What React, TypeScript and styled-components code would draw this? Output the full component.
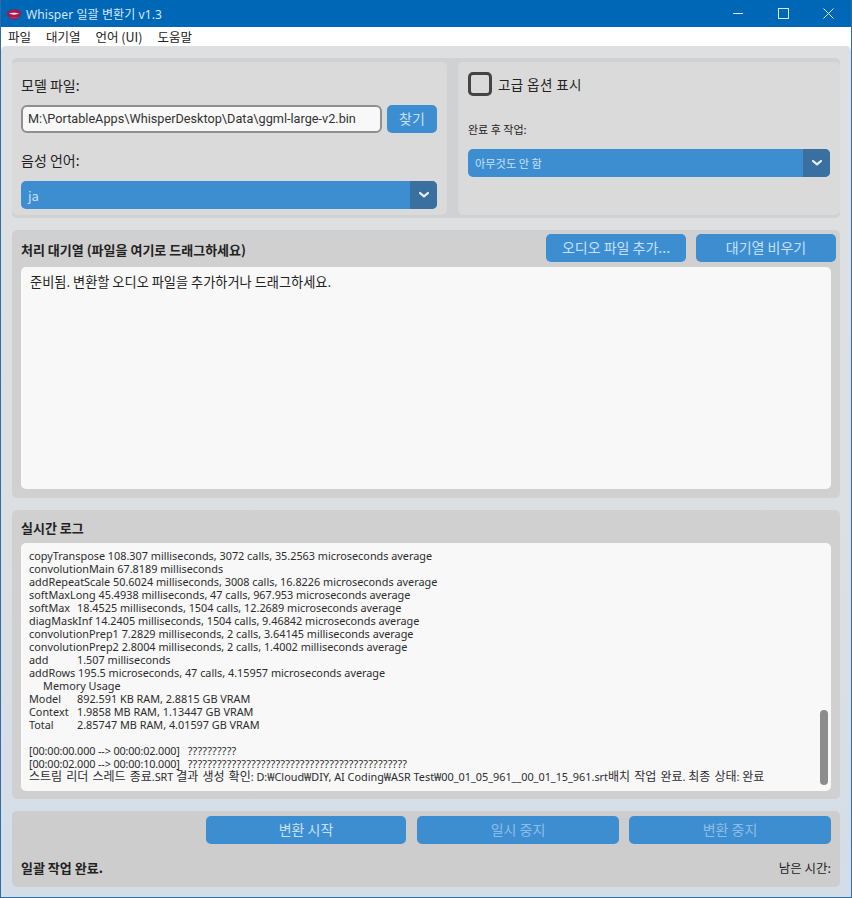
import React from "react";
import styled, { createGlobalStyle } from "styled-components";

const KR = `"Noto Sans CJK KR", "Noto Sans", sans-serif`;
const LOG = `"Noto Sans", "Noto Sans CJK KR", sans-serif`;

const Global = createGlobalStyle`
  html, body { margin: 0; padding: 0; background: #dfe3e8; }
  * { box-sizing: border-box; }
`;

const Win = styled.div`
  width: 852px; height: 898px; display: flex; flex-direction: column;
  border: 1px solid #2c6ea8; border-top: none; background: #fff;
  font-family: ${KR}; color: #1a1a1a; overflow: hidden;
`;
const TitleBar = styled.div`
  height: 27px; flex: none; background: #0067b6; color: #d5e8f6; display: flex; align-items: center;
  padding-left: 5px; font-size: 12px;
`;
const Title = styled.span` flex: 1; margin-left: 4px; letter-spacing: 0.1px; font-family: "Noto Sans", ${KR}; `;
const WinBtn = styled.div`
  width: 45px; height: 27px; display: flex; align-items: center; justify-content: center;
`;
const MenuBar = styled.div`
  height: 19px; flex: none; background: #fff; display: flex; align-items: center; padding-left: 7px; gap: 15px;
  font-size: 12.5px; color: #222;
`;
const Main = styled.div`
  flex: 1; display: flex; flex-direction: column; padding: 12px 11px 10px 11px; gap: 12px;
  background: linear-gradient(180deg, #dedfe1 0%, #dcdfe2 60%, #d3dde8 100%);
  border-radius: 5px 5px 0 0; min-height: 0;
`;
const TopRow = styled.div`
  display: flex; gap: 11px; height: 160px; flex: none; padding: 4px 0 3px; background: #d0d1d2; border-radius: 5px;
`;
const Panel = styled.div<{ $w: number; $pl: number }>`
  width: ${p => p.$w}px; flex: none; background: #dadada; border-radius: 5px; padding: 0 10px 0 ${p => p.$pl}px;
  display: flex; flex-direction: column;
`;
const Label = styled.div<{ $top: number; $bottom: number }>`
  font-size: 14px; line-height: 20px; height: 20px; color: #222;
  margin-top: ${p => p.$top}px; margin-bottom: ${p => p.$bottom}px;
`;
const FileRow = styled.div` display: flex; gap: 5px; `;
const FileInput = styled.div`
  width: 362px; height: 28px; background: #f8f8f8; border: 2px solid #8f8f8f; border-radius: 6px;
  font-family: Roboto, sans-serif; font-size: 12.7px; line-height: 24px; padding-left: 5px; color: #333; white-space: nowrap;
`;
const Btn = styled.div<{ $w: number; $dim?: boolean; $mr?: number }>`
  height: 28px; background: #3d8ed1; border-radius: 5px; color: ${p => (p.$dim ? "#8dbde6" : "#c8e0f4")}; font-size: 14px;
  display: flex; align-items: center; justify-content: center; flex: none; padding-bottom: 2px;
  width: ${p => p.$w}px; margin-right: ${p => p.$mr || 0}px;
`;
const Combo = styled.div`
  height: 28px; background: #3d8ed1; border-radius: 5px; display: flex; align-items: center; color: #c8e0f4; overflow: hidden;
`;
const ComboText = styled.div<{ $small?: boolean }>`
  flex: 1; padding-left: 7px; font-size: ${p => (p.$small ? "11.2px" : "13px")};
`;
const ComboArrow = styled.div`
  width: 27px; height: 28px; background: #3a70a0; display: flex; align-items: center; justify-content: center;
`;
const CheckRow = styled.div` display: flex; align-items: center; gap: 6px; margin-top: 10px; `;
const CheckBox = styled.div`
  width: 24px; height: 24px; border: 3px solid #444; border-radius: 5px;
`;
const CheckLabel = styled.span` font-size: 13.5px; color: #222; letter-spacing: 0.4px; `;
const SmallLabel = styled.div` font-size: 11px; line-height: 16px; margin-top: 25px; margin-bottom: 12px; color: #222; `;
const Section = styled.div<{ $h: number; $bg?: string }>`
  height: ${p => p.$h}px; flex: none; background: ${p => p.$bg || "#d0d0d0"}; border-radius: 5px; padding: 0 9px;
  display: flex; flex-direction: column;
`;
const QueueHead = styled.div`
  display: flex; align-items: center; height: 28px; margin-top: 4px; margin-right: -5px; margin-bottom: 5px; gap: 10px;
`;
const BoldLabel = styled.div` font-size: 13px; font-weight: 700; flex: 1; color: #222; padding-top: 2px;`;
const TextPane = styled.div<{ $h: number }>`
  height: ${p => p.$h}px; background: #f8f8f8; border-radius: 5px; position: relative; overflow: hidden;
`;
const ReadyText = styled.div` font-size: 13.2px; line-height: 18px; padding: 6px 9px; color: #222; `;
const LogHead = styled.div` font-size: 13px; font-weight: 700; height: 33px; display: flex; align-items: center; color: #222; padding-top: 2px; `;
const LogText = styled.div`
  font-family: ${LOG}; font-size: 10.85px; line-height: 13px; padding: 6px 8px 0; color: #2c2c2c; white-space: pre; tab-size: 48px;
`;
const Ko = styled.span` font-size: 12px; word-spacing: 1px; `;
const Time = styled.span` letter-spacing: -0.14px; `;
const Marks = styled.span` letter-spacing: 0.17px; padding-left: 8px; `;
const Scroll = styled.div`
  position: absolute; right: 3px; top: 167px; width: 8px; height: 75px; background: #8c8c8c; border-radius: 4px;
`;
const ActionRow = styled.div` display: flex; gap: 10px; justify-content: flex-end; margin-top: 5px; `;
const StatusRow = styled.div`
  display: flex; justify-content: space-between; align-items: center; margin-top: 14px; font-size: 13px; color: #222;
`;
const Strong = styled.span` font-weight: 700; `;
const Remaining = styled.span` font-size: 12.5px; `;

const Chevron = () => (
  <svg width="12" height="8" viewBox="0 0 12 8" fill="none">
    <path d="M2 2l4 3.4L10 2" stroke="#e8f0f7" strokeWidth="2.2" strokeLinecap="round" strokeLinejoin="round" />
  </svg>
);
const Lips = () => (
  <svg width="16" height="12" viewBox="0 0 16 12">
    <path d="M.5 5.500C3 2 6 .6 8 1.800c2-1.200 5 0 7.500 3.700-2.500 4.500-5 6-7.500 6S3 10 .5 5.500z" fill="#a8174a" />
    <path d="M3 8c2 2 8 2 10 0-2 3-8 3-10 0z" fill="#d9557f" />
    <path d="M3 5.500c2.500-1 7.500-1 10 0-2.500 1.500-7.500 1.500-10 0z" fill="#f6e8ea" />
  </svg>
);

const log = `copyTranspose 108.307 milliseconds, 3072 calls, 35.2563 microseconds average
convolutionMain 67.8189 milliseconds
addRepeatScale 50.6024 milliseconds, 3008 calls, 16.8226 microseconds average
softMaxLong 45.4938 milliseconds, 47 calls, 967.953 microseconds average
softMax\t18.4525 milliseconds, 1504 calls, 12.2689 microseconds average
diagMaskInf 14.2405 milliseconds, 1504 calls, 9.46842 microseconds average
convolutionPrep1 7.2829 milliseconds, 2 calls, 3.64145 milliseconds average
convolutionPrep2 2.8004 milliseconds, 2 calls, 1.4002 milliseconds average
add\t1.507 milliseconds
addRows 195.5 microseconds, 47 calls, 4.15957 microseconds average
\u00A0\u00A0\u00A0\u00A0\u00A0Memory Usage
Model\t892.591 KB RAM, 2.8815 GB VRAM
Context\t1.9858 MB RAM, 1.13447 GB VRAM
Total\t2.85747 MB RAM, 4.01597 GB VRAM

`;

export default function App() {
  return (
    <Win>
      <Global />
      <TitleBar>
        <Lips />
        <Title>Whisper 일괄 변환기 v1.3</Title>
        <WinBtn>
          <svg width="11" height="11" viewBox="0 0 11 11"><path d="M0 5.500h10" stroke="#d8e8f5" /></svg>
        </WinBtn>
        <WinBtn>
          <svg width="11" height="11" viewBox="0 0 11 11"><rect x=".5" y=".5" width="10" height="10" fill="none" stroke="#d8e8f5" /></svg>
        </WinBtn>
        <WinBtn>
          <svg width="11" height="11" viewBox="0 0 11 11"><path d="M.5.5l10 10M10.500.5l-10 10" stroke="#d8e8f5" /></svg>
        </WinBtn>
      </TitleBar>
      <MenuBar>
        <span>파일</span><span>대기열</span><span>언어 (UI)</span><span>도움말</span>
      </MenuBar>
      <Main>
        <TopRow>
          <Panel $w={435} $pl={9}>
            <Label $top={13} $bottom={10}>모델 파일:</Label>
            <FileRow>
              <FileInput>M:\PortableApps\WhisperDesktop\Data\ggml-large-v2.bin</FileInput>
              <Btn $w={50}>찾기</Btn>
            </FileRow>
            <Label $top={17} $bottom={11}>음성 언어:</Label>
            <Combo>
              <ComboText>ja</ComboText>
              <ComboArrow><Chevron /></ComboArrow>
            </Combo>
          </Panel>
          <Panel $w={382} $pl={10}>
            <CheckRow>
              <CheckBox />
              <CheckLabel>고급 옵션 표시</CheckLabel>
            </CheckRow>
            <SmallLabel>완료 후 작업:</SmallLabel>
            <Combo>
              <ComboText $small>아무것도 안 함</ComboText>
              <ComboArrow><Chevron /></ComboArrow>
            </Combo>
          </Panel>
        </TopRow>
        <Section $h={268}>
          <QueueHead>
            <BoldLabel>처리 대기열 (파일을 여기로 드래그하세요)</BoldLabel>
            <Btn $w={140}>오디오 파일 추가...</Btn>
            <Btn $w={140}>대기열 비우기</Btn>
          </QueueHead>
          <TextPane $h={222}>
            <ReadyText>준비됨. 변환할 오디오 파일을 추가하거나 드래그하세요.</ReadyText>
          </TextPane>
        </Section>
        <Section $h={289}>
          <LogHead>실시간 로그</LogHead>
          <TextPane $h={248}>
            <LogText>
              {log}
              <Time>[00:00:00.000 --&gt; 00:00:02.000]</Time><Marks>??????????</Marks>{"\n"}
              <Time>[00:00:02.000 --&gt; 00:00:10.000]</Time><Marks>?????????????????????????????????????????????</Marks>{"\n"}
              <Ko>스트림 리더 스레드 종료</Ko>.SRT <Ko>결과 생성 확인</Ko>: D:₩Cloud₩DIY, AI Coding₩ASR Test₩00_01_05_961__00_01_15_961.srt<Ko>배치 작업 완료</Ko>. <Ko>최종 상태</Ko>: <Ko>완료</Ko>
            </LogText>
            <Scroll />
          </TextPane>
        </Section>
        <Section $h={76} $bg="#cdcdcd">
          <ActionRow>
            <Btn $w={200} $mr={1}>변환 시작</Btn>
            <Btn $w={202} $dim>일시 중지</Btn>
            <Btn $w={202} $dim>변환 중지</Btn>
          </ActionRow>
          <StatusRow>
            <Strong>일괄 작업 완료.</Strong>
            <Remaining>남은 시간:</Remaining>
          </StatusRow>
        </Section>
      </Main>
    </Win>
  );
}
